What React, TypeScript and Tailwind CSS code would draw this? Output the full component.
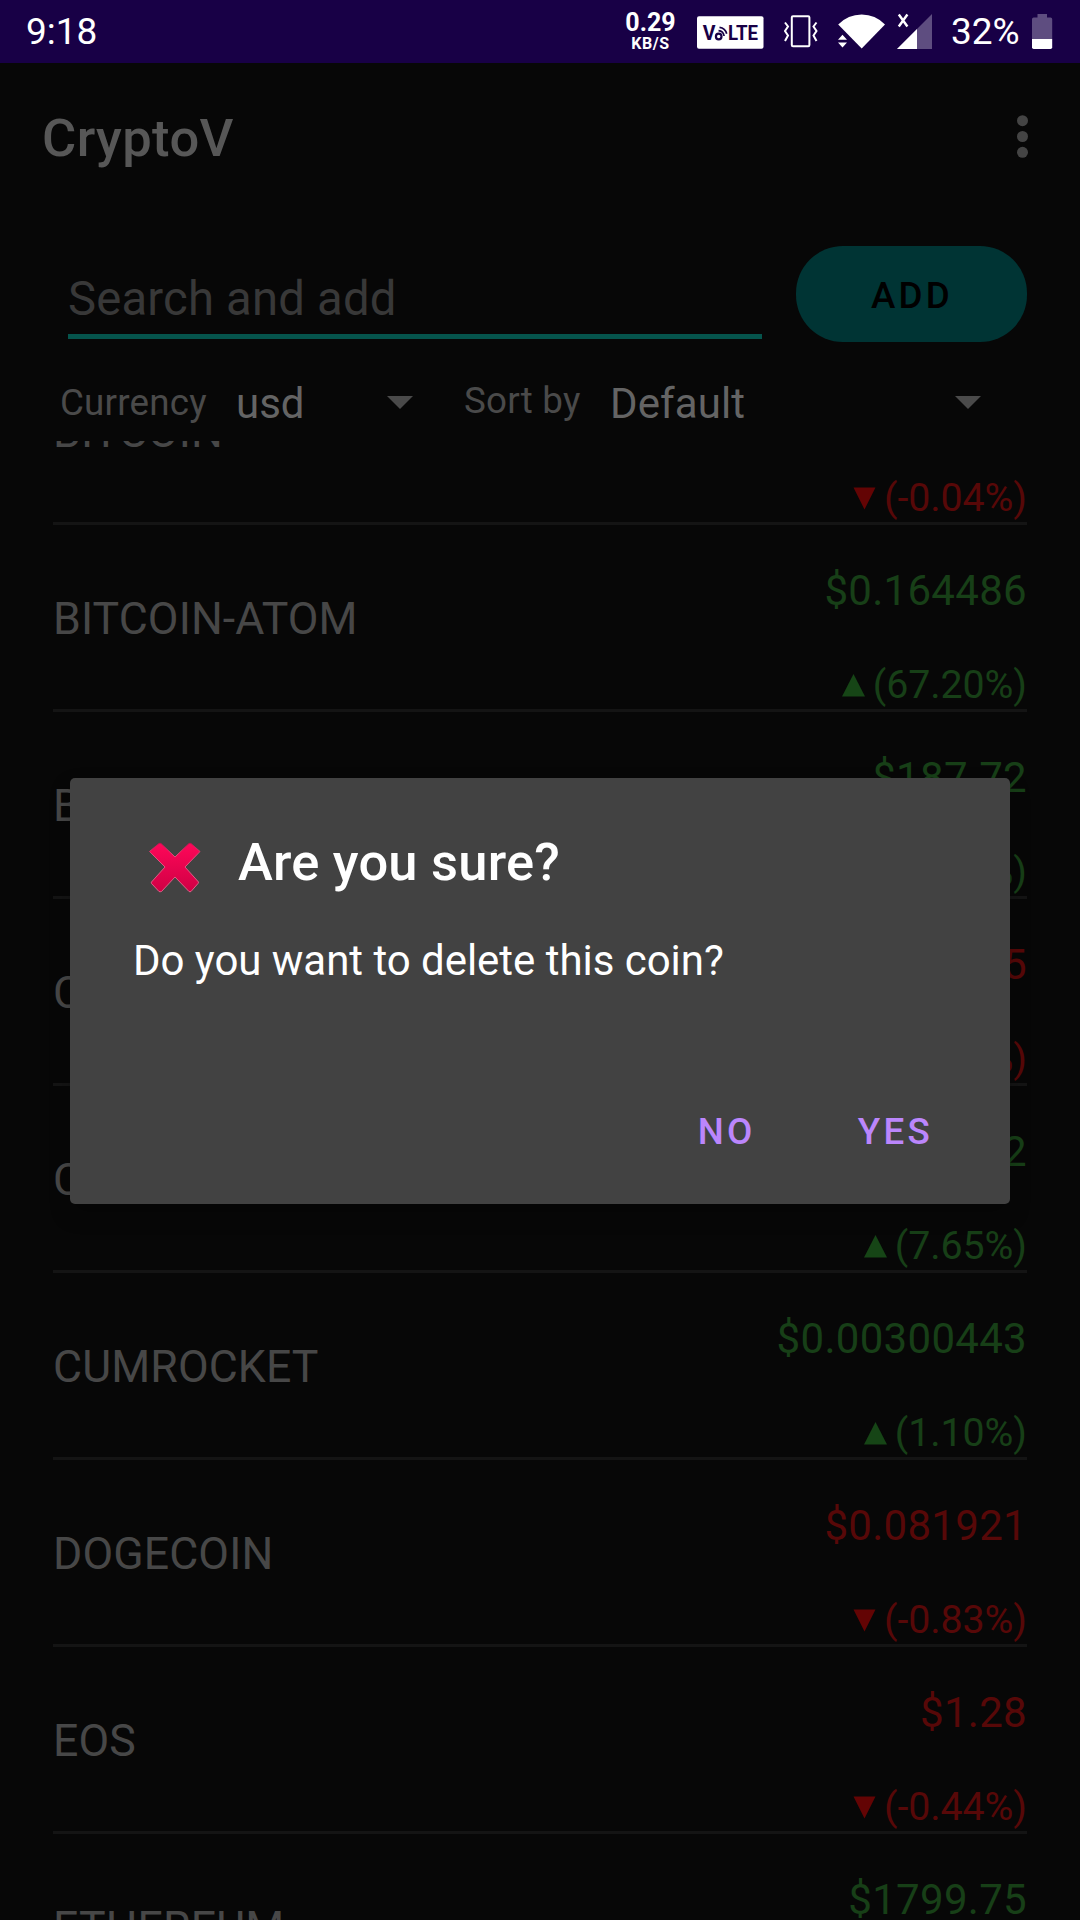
import React from "react";

type Coin = { name: string; price: string; change: string; up: boolean };

const coins: Coin[] = [
  { name: "BITCOIN", price: "", change: "(-0.04%)", up: false },
  { name: "BITCOIN-ATOM", price: "$0.164486", change: "(67.20%)", up: true },
  { name: "BITCOIN-CASH", price: "$187.72", change: "(2.10%)", up: true },
  { name: "CARDANO", price: "$0.25", change: "(-0.65%)", up: false },
  { name: "CHAINLINK", price: "$6.12", change: "(7.65%)", up: true },
  { name: "CUMROCKET", price: "$0.00300443", change: "(1.10%)", up: true },
  { name: "DOGECOIN", price: "$0.081921", change: "(-0.83%)", up: false },
  { name: "EOS", price: "$1.28", change: "(-0.44%)", up: false },
  { name: "ETHEREUM", price: "$1799.75", change: "", up: true },
];

function StatusBar() {
  return (
    <header className="flex h-[63px] shrink-0 items-start bg-[#180046] text-white">
      <div className="ml-[26px] mt-[10px] w-[598px] text-[37px] leading-[44px]">9:18</div>
      <div className="mt-[12px] flex w-[53px] flex-col items-center font-bold">
        <span className="text-[25px] leading-[22px]">0.29</span>
        <span className="mt-[2px] text-[16px] leading-[15px] tracking-[0.6px]">KB/S</span>
      </div>
      <svg className="ml-[20px]" width="67" height="63" viewBox="697 0 67 63">
        <rect x="697" y="16.3" width="66.5" height="32.4" rx="2" fill="#fff" />
        <g fill="#180046" fontFamily="Roboto, sans-serif" fontWeight="700" fontSize="19.5">
          <text x="702.8" y="40">V</text>
          <text x="728" y="40" textLength="30" lengthAdjust="spacingAndGlyphs">LTE</text>
        </g>
        <g fill="none" stroke="#180046">
          <circle cx="718.7" cy="36.5" r="2.8" strokeWidth="2.2" />
          <path d="M718.5 30.6a6.2 6.2 0 0 1 5.6 5.4M719.5 27.4a8.6 8.6 0 0 1 7.2 6.4" strokeWidth="1.7" />
        </g>
      </svg>
      <svg className="ml-[19px]" width="36" height="63" viewBox="783 0 36 63" fill="none" stroke="#fff" strokeWidth="2">
        <rect x="791.8" y="16.3" width="17.6" height="30" rx="1.2" />
        <path d="M785 22.5l3 4-3 4.500 3 4.500-3 5.500M816.500 22.500l-3 4 3 4.500-3 4.500 3 5.500" />
      </svg>
      <svg className="ml-[18px]" width="49" height="63" viewBox="837 0 49 63" fill="#fff">
        <path d="M861.7 48.5L838.2 24.5Q848 14.5 861.7 14.5T885 24.5z" />
        <path d="M838 39.8l4.5-5 4.5 5zM838 42.6h9l-4.5 5z" />
      </svg>
      <svg className="ml-[11px]" width="36" height="63" viewBox="897 0 36 63">
        <path d="M897 49L932 14V49z" fill="#5e4d80" />
        <path d="M897 49L917 29V49z" fill="#fff" />
        <path d="M898.800 14.500l8.600 12M907.400 14.500l-8.600 12" stroke="#fff" strokeWidth="2.4" />
      </svg>
      <div className="ml-[18px] mt-[10px] w-[81px] text-[37px] leading-[44px]">32%</div>
      <svg width="21" height="63" viewBox="1032 0 21 63">
        <path d="M1037.500 14h9.500v3.500h3.500q1.700 0 1.700 1.700V39h-20.200V19.200q0-1.700 1.700-1.700h3.800z" fill="#5e4d80" />
        <path d="M1032 39h20.200v8.300q0 1.700-1.700 1.700h-16.800q-1.700 0-1.700-1.700z" fill="#fff" />
      </svg>
    </header>
  );
}

function Caret() {
  return (
    <svg width="26" height="13" viewBox="0 0 26 13" fill="#4a4a4a">
      <path d="M0 0h26L13 13z" />
    </svg>
  );
}

function CoinRow({ coin }: { coin: Coin }) {
  const tone = coin.up ? "text-[#173f17]" : "text-[#570808]";
  return (
    <li className="flex h-[187px] shrink-0 items-start justify-between border-b-[3px] border-[#141414]">
      <span className="mt-[68px] text-[44.625px] leading-[52px] tracking-[0.12px] text-[#474747]">{coin.name}</span>
      <div className={"flex flex-col items-end " + tone}>
        <span className="mt-[41px] h-[50px] text-[42px] leading-[50px] tracking-[0.3px]">{coin.price}</span>
        {coin.change && (
          <span className="mt-[46px] flex items-center text-[39.375px] leading-[46px] tracking-[-0.08px]">
            <svg
              className="mr-[8px]"
              width="23"
              height="23"
              viewBox="0 0 23 23"
              fill={coin.up ? "#164516" : "#630404"}
            >
              <path d={coin.up ? "M0 22.500L11.500 0L23 22.500z" : "M.5 .5H22.500L11.500 22.500z"} />
            </svg>
            {coin.change}
          </span>
        )}
      </div>
    </li>
  );
}

function Dialog() {
  return (
    <div className="absolute left-[70px] top-[778px] flex h-[426px] w-[940px] flex-col rounded-[5px] bg-[#424242] text-white shadow-[0_10px_20px_0px_rgba(0,0,0,0.25)]">
      <div className="ml-[78px] mt-[52px] flex items-start">
        <svg className="mt-[11px]" width="54" height="54" viewBox="0 0 54 54">
          <defs>
            <linearGradient id="cross" x1="0" y1="0" x2="0" y2="1">
              <stop offset="0" stopColor="#ff0759" />
              <stop offset="1" stopColor="#cf0044" />
            </linearGradient>
            <linearGradient id="edge" x1="0" y1="0" x2="0" y2="1">
              <stop offset="0" stopColor="#c01050" />
              <stop offset="0.25" stopColor="#e0507c" />
              <stop offset="1" stopColor="#d86488" />
            </linearGradient>
          </defs>
          <path
            d="M11 2.500Q12 2 13 2.500L27 16L41 2.500Q42 2 43 2.500L52 10.500L37 26L50.500 41Q50.500 42 50 42.500L43 50.500Q42 51 41 50.500L27 36L13.500 50.500Q12 51 11 50.500L3.500 42.500Q3 42 3.500 41L17 26L1.500 10.500z"
            fill="url(#cross)"
            stroke="url(#edge)"
            strokeWidth="1"
          />
        </svg>
        <h2 className="ml-[36px] text-[52.5px] font-medium leading-[64px] tracking-[0.2px]">Are you sure?</h2>
      </div>
      <p className="ml-[63px] mt-[41px] text-[42px] leading-[50px] tracking-[-0.03px]">Do you want to delete this coin?</p>
      <div className="mt-[124px] flex justify-end pr-[77px] text-[36.75px] font-medium leading-[44px] tracking-[3.28px] text-[#bb86fc]">
        <button className="mr-[102px]">NO</button>
        <button>YES</button>
      </div>
    </div>
  );
}

export default function App() {
  return (
    <div className="relative flex h-[1920px] w-[1080px] flex-col overflow-hidden bg-[#070707] font-[Roboto,sans-serif]">
      <StatusBar />
      <div className="flex h-[183px] shrink-0 items-start justify-between pl-[42px] pr-[51px]">
        <h1 className="mt-[43px] text-[52.5px] font-medium leading-[64px] tracking-[0.4px] text-[#575757]">CryptoV</h1>
        <svg className="mt-[52px]" width="12" height="44" viewBox="0 0 12 44" fill="#444">
          <circle cx="5.500" cy="5.700" r="5.500" />
          <circle cx="5.500" cy="21.500" r="5.500" />
          <circle cx="5.500" cy="37.300" r="5.500" />
        </svg>
      </div>
      <div className="flex h-[96px] shrink-0 items-start pl-[68px]">
        <div className="h-[93px] w-[694px] border-b-[5px] border-[#05544c] pt-[25px] text-[47.25px] leading-[56px] tracking-[0.18px] text-[#383838]">
          Search and add
        </div>
        <button className="ml-[34px] h-[96px] w-[231px] rounded-[47px] bg-[#003434] pl-[1px] pt-[4px] text-[36.75px] font-medium tracking-[3.28px] text-black">
          ADD
        </button>
      </div>
      <div className="flex h-[99px] shrink-0 items-start pl-[60px] text-[#4a4a4a]">
        <span className="mt-[39px] w-[176px] text-[36.75px] leading-[44px] tracking-[0.2px]">Currency</span>
        <span className="mt-[37px] w-[151px] text-[42px] leading-[50px] text-[#646464]">usd</span>
        <div className="mt-[54px]">
          <Caret />
        </div>
        <span className="ml-[51px] mt-[37px] w-[146px] text-[36.75px] leading-[44px] tracking-[0.2px]">Sort by</span>
        <span className="mt-[37px] w-[345px] text-[42px] leading-[50px] tracking-[0.1px] text-[#646464]">Default</span>
        <div className="mt-[54px]">
          <Caret />
        </div>
      </div>
      <ul className="flex min-h-0 flex-1 flex-col overflow-hidden pl-[53px] pr-[53px]">
        <li className="-mt-[103px] list-none" />
        {coins.map((coin) => (
          <CoinRow key={coin.name} coin={coin} />
        ))}
      </ul>
      <Dialog />
    </div>
  );
}
